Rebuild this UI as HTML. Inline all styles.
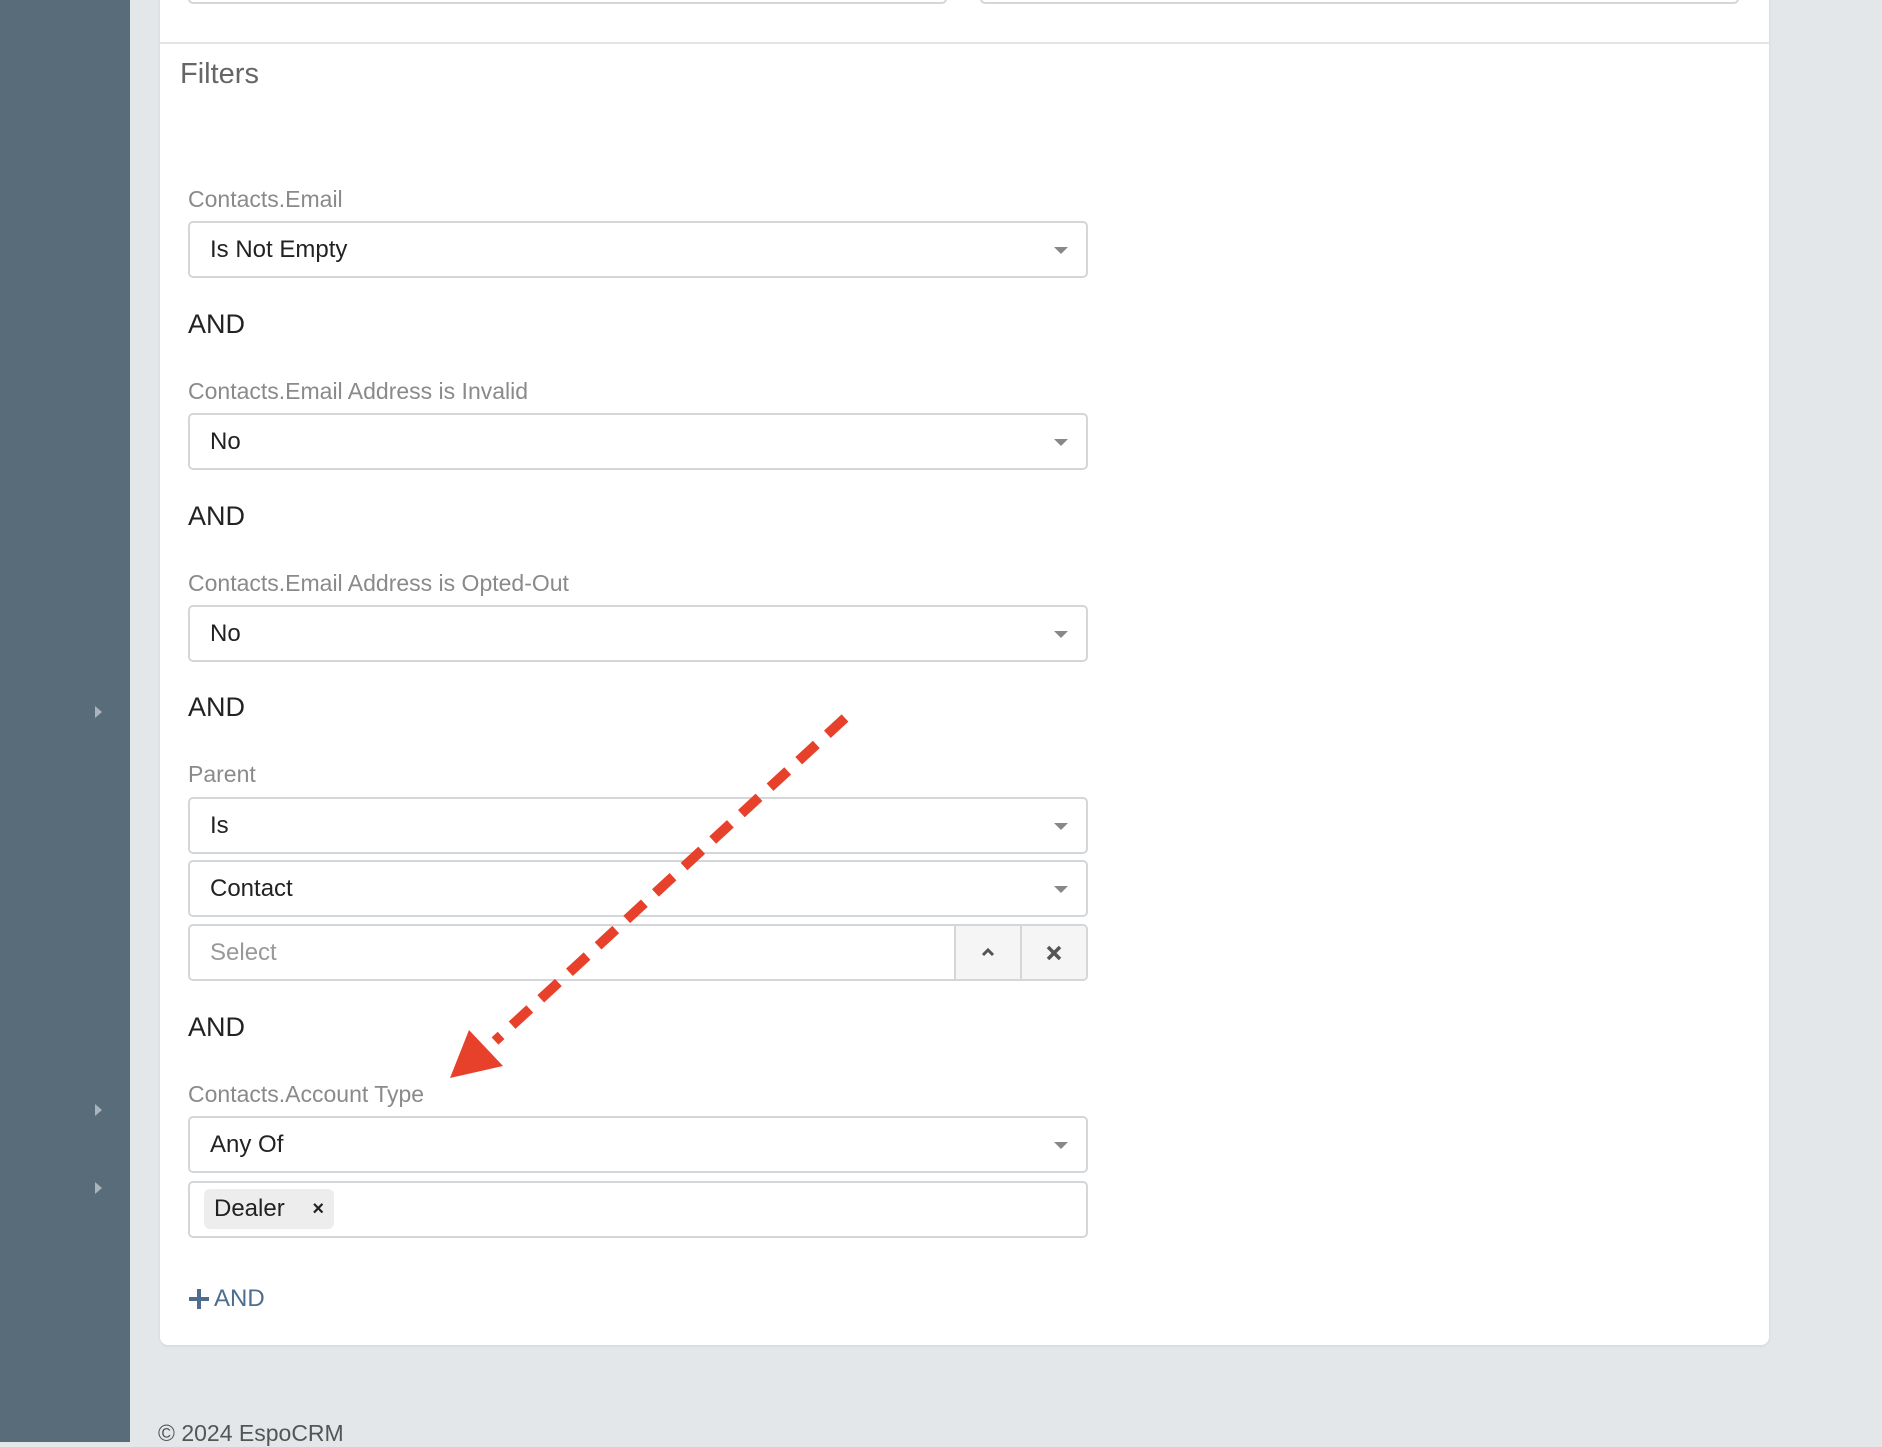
<!DOCTYPE html>
<html><head><meta charset="utf-8">
<style>
*{box-sizing:border-box;margin:0;padding:0}
body{width:1882px;height:1442px;background:#e3e7ea;font-family:"Liberation Sans",sans-serif;position:relative;overflow:hidden}
.side{position:absolute;left:0;top:0;width:130px;height:1442px;background:#596c79}
.tri{position:absolute;left:95px;width:0;height:0;border-top:6px solid transparent;border-bottom:6px solid transparent;border-left:7px solid #a9b4bc}
.panel{position:absolute;left:160px;top:-10px;width:1609px;height:1355px;background:#fff;border-radius:8px;box-shadow:0 1px 3px rgba(0,0,0,.08)}
.sep{position:absolute;left:160px;top:42px;width:1609px;height:2px;background:#e2e5e8}
.abs{position:absolute}
.inp{position:absolute;left:188px;width:900px;height:57px;border:2px solid #d4d7da;border-radius:5px;background:#fff;font-size:24px;color:#222;padding-left:20px;line-height:53px}
.inp .car{position:absolute;right:18px;top:24px;border-left:7px solid transparent;border-right:7px solid transparent;border-top:7px solid #888}
.lbl{position:absolute;left:188px;font-size:23px;color:#8a8a8a}
.and{position:absolute;left:188px;font-size:27px;color:#222}
</style></head><body>
<div class="side"></div>
<div class="tri" style="top:706px"></div>
<div class="tri" style="top:1104px"></div>
<div class="tri" style="top:1182px"></div>
<div class="panel"></div>
<div class="abs" style="left:188px;top:-20px;width:759px;height:24px;border:2px solid #d4d7da;border-radius:5px"></div>
<div class="abs" style="left:980px;top:-20px;width:759px;height:24px;border:2px solid #d4d7da;border-radius:5px"></div>
<div class="sep"></div>
<div class="abs" style="left:180px;top:58px;font-size:29px;color:#666">Filters</div>

<div class="lbl" style="top:186px">Contacts.Email</div>
<div class="inp" style="top:221px">Is Not Empty<span class="car"></span></div>
<div class="and" style="top:309px">AND</div>
<div class="lbl" style="top:378px">Contacts.Email Address is Invalid</div>
<div class="inp" style="top:413px">No<span class="car"></span></div>
<div class="and" style="top:501px">AND</div>
<div class="lbl" style="top:570px">Contacts.Email Address is Opted-Out</div>
<div class="inp" style="top:605px">No<span class="car"></span></div>
<div class="and" style="top:692px">AND</div>
<div class="lbl" style="top:761px">Parent</div>
<div class="inp" style="top:797px">Is<span class="car"></span></div>
<div class="inp" style="top:860px">Contact<span class="car"></span></div>
<div class="inp" style="top:924px;color:#999;overflow:hidden">Select
  <div class="abs" style="right:0;top:0;width:132px;height:53px;background:#f5f5f5;border-left:2px solid #d4d7da"></div>
  <div class="abs" style="right:64px;top:0;width:2px;height:53px;background:#d4d7da"></div>
  <svg class="abs" style="right:90px;top:20px" width="16" height="12"><path d="M3 9 L8 4 L13 9" stroke="#555" stroke-width="3" fill="none"/></svg>
  <svg class="abs" style="right:24px;top:19px" width="16" height="16"><path d="M2 2 L14 14 M14 2 L2 14" stroke="#555" stroke-width="3.5"/></svg>
</div>
<div class="and" style="top:1012px">AND</div>
<div class="lbl" style="top:1081px">Contacts.Account Type</div>
<div class="inp" style="top:1116px">Any Of<span class="car"></span></div>
<div class="inp" style="top:1181px;padding-left:0">
  <div class="abs" style="left:14px;top:6px;width:130px;height:40px;background:#ededed;border-radius:6px;font-size:24px;line-height:40px;padding-left:10px;color:#222">Dealer<span style="position:absolute;right:10px;font-size:20px;font-weight:bold">&#215;</span></div>
</div>
<svg class="abs" style="left:188px;top:1288px" width="22" height="22"><path d="M11 1 V21 M1 11 H21" stroke="#4e6d8f" stroke-width="4"/></svg>
<div class="abs" style="left:214px;top:1285px;font-size:24px;color:#4e6d8f">AND</div>
<div class="abs" style="left:158px;top:1420px;font-size:23px;color:#555">© 2024 EspoCRM</div>

<svg class="abs" style="left:0;top:0" width="1882" height="1442">
<line x1="845" y1="718" x2="495" y2="1041" stroke="#e8412b" stroke-width="10" stroke-dasharray="24 15"/>
<polygon points="450,1078 469,1030 503,1066" fill="#e8412b"/>
</svg>
</body></html>
